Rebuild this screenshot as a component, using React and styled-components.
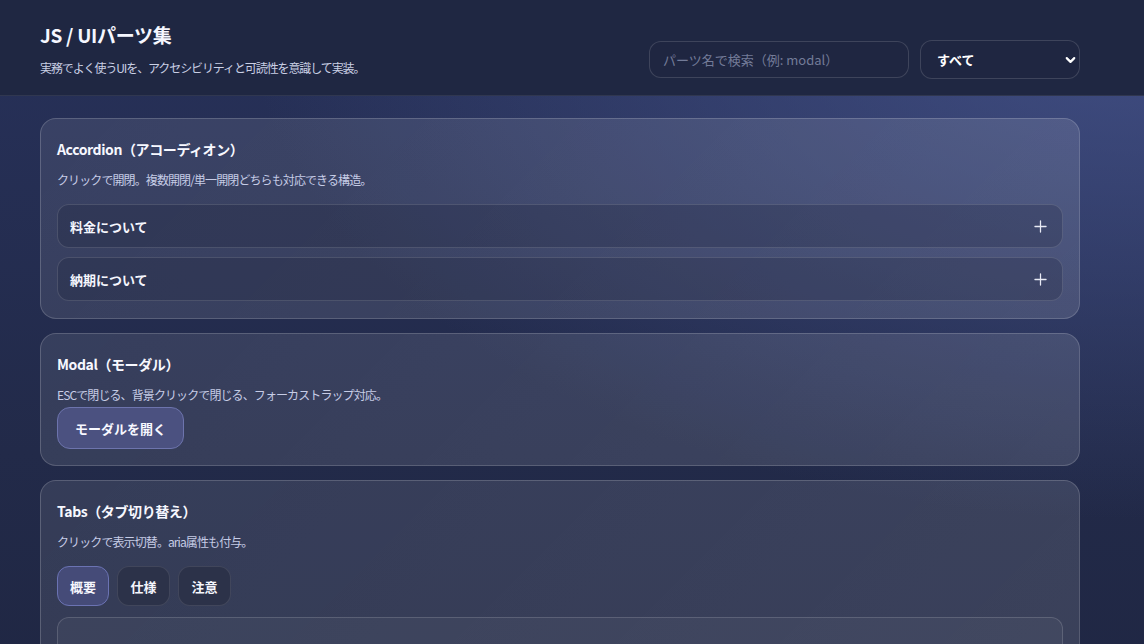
import React, { useState } from "react";
import styled, { createGlobalStyle } from "styled-components";
import { Plus, ChevronDown } from "lucide-react";

const GlobalStyle = createGlobalStyle`
  html, body {
    margin: 0;
    padding: 0;
    height: 100%;
  }
  body {
    font-family: "Noto Sans CJK JP", "Noto Sans", sans-serif;
    color: #f3f5fc;
    background: #222a48;
    overflow: hidden;
  }
  * { box-sizing: border-box; }
`;

const Page = styled.div`
  min-height: 100vh;
  background:
    radial-gradient(ellipse 900px 520px at 100% 0%, rgba(70, 84, 140, 0.85), rgba(70, 84, 140, 0) 100%),
    linear-gradient(180deg, #27315a 0%, #222a49 60%, #1f2642 100%);
`;

const Header = styled.header`
  background: #1f2742;
  border-bottom: 1px solid rgba(255, 255, 255, 0.08);
  padding: 21px 0 18px 40px;
`;

const HeaderInner = styled.div`
  width: 1040px;
  display: flex;
  justify-content: space-between;
  align-items: flex-end;
`;

const Brand = styled.div`
  display: flex;
  flex-direction: column;
`;

const SiteTitle = styled.h1`
  margin: 0;
  font-size: 19px;
  line-height: 28px;
  font-weight: 700;
  letter-spacing: -0.3px;
  color: #f5f7ff;
`;

const SiteLead = styled.p`
  margin: 10px 0 0;
  font-size: 12px;
  line-height: 18px;
  letter-spacing: -1.1px;
  color: #c9cfe4;
`;

const Controls = styled.div`
  display: flex;
  align-items: center;
  gap: 11px;
  margin-bottom: -2px;
`;

const Search = styled.input`
  width: 260px;
  height: 37px;
  border-radius: 12px;
  border: 1px solid rgba(255, 255, 255, 0.14);
  background: #1f2641;
  color: #f3f5fc;
  padding: 0 13px;
  font-family: inherit;
  font-size: 13px;
  outline: none;
  &::placeholder {
    color: #737b98;
  }
`;

const SelectWrap = styled.div`
  position: relative;
  width: 160px;
`;

const Select = styled.select`
  appearance: none;
  width: 100%;
  height: 39px;
  border-radius: 12px;
  border: 1px solid rgba(255, 255, 255, 0.14);
  background: #1f2641;
  color: #ffffff;
  padding: 0 16px;
  font-family: inherit;
  font-size: 13px;
  font-weight: 700;
  outline: none;
`;

const SelectIcon = styled.span`
  position: absolute;
  right: 2px;
  top: 50%;
  transform: translateY(-50%);
  display: flex;
  color: #ffffff;
  pointer-events: none;
`;

const Main = styled.main`
  padding: 22px 0 0 40px;
  display: flex;
  flex-direction: column;
  gap: 14px;
`;

const Card = styled.section`
  width: 1040px;
  border-radius: 16px;
  border: 1px solid rgba(255, 255, 255, 0.17);
  background: linear-gradient(135deg, rgba(255, 255, 255, 0.09), rgba(255, 255, 255, 0.12));
  padding: 16px;
`;

const CardTitle = styled.h2`
  margin: 0;
  font-size: 14px;
  line-height: 28px;
  font-weight: 700;
  letter-spacing: -0.4px;
  color: #f7f8ff;
`;

const CardLead = styled.p`
  margin: 8px 0 0;
  font-size: 12px;
  line-height: 18px;
  letter-spacing: -0.9px;
  color: #c6cce6;
`;

const AccordionList = styled.div`
  margin-top: 15px;
  padding-bottom: 1px;
  display: flex;
  flex-direction: column;
  gap: 9px;
`;

const AccordionButton = styled.button`
  width: 100%;
  height: 44px;
  display: flex;
  align-items: center;
  justify-content: space-between;
  padding: 0 12px 0 12px;
  border-radius: 12px;
  border: 1px solid rgba(255, 255, 255, 0.13);
  background: rgba(22, 27, 50, 0.22);
  color: #f5f6fd;
  font-family: inherit;
  font-size: 13px;
  font-weight: 700;
  cursor: pointer;
  text-align: left;
`;

const PrimaryButton = styled.button`
  margin-top: 3px;
  height: 42px;
  padding: 0 17px;
  border-radius: 13px;
  border: 1px solid #6d74ad;
  background: #4b5180;
  color: #f7f8ff;
  font-family: inherit;
  font-size: 13px;
  font-weight: 700;
  cursor: pointer;
`;

const TabList = styled.div`
  margin-top: 15px;
  display: flex;
  gap: 8px;
`;

const Tab = styled.button`
  width: ${(p) => (p.$active ? "52px" : "53px")};
  height: 40px;
  border-radius: 12px;
  border: 1px solid ${(p) => (p.$active ? "#6b73b3" : "rgba(255, 255, 255, 0.1)")};
  background: ${(p) => (p.$active ? "#454b78" : "#2c3249")};
  color: #f5f6fd;
  font-family: inherit;
  font-size: 13px;
  font-weight: 700;
  cursor: pointer;
`;

const TabPanel = styled.div`
  margin-top: 11px;
  height: 120px;
  border-radius: 12px;
  border: 1px solid rgba(255, 255, 255, 0.15);
  background: rgba(255, 255, 255, 0.04);
`;

const faqs = ["料金について", "納期について"];
const tabs = ["概要", "仕様", "注意"];

export default function App() {
  const [activeTab, setActiveTab] = useState(0);

  return (
    <>
      <GlobalStyle />
      <Page>
        <Header>
          <HeaderInner>
            <Brand>
              <SiteTitle>JS / UIパーツ集</SiteTitle>
              <SiteLead>実務でよく使うUIを、アクセシビリティと可読性を意識して実装。</SiteLead>
            </Brand>
            <Controls>
              <Search placeholder="パーツ名で検索（例: modal）" />
              <SelectWrap>
                <Select defaultValue="all">
                  <option value="all">すべて</option>
                </Select>
                <SelectIcon>
                  <ChevronDown size={15} strokeWidth={3.5} />
                </SelectIcon>
              </SelectWrap>
            </Controls>
          </HeaderInner>
        </Header>

        <Main>
          <Card>
            <CardTitle>Accordion（アコーディオン）</CardTitle>
            <CardLead>クリックで開閉。複数開閉/単一開閉どちらも対応できる構造。</CardLead>
            <AccordionList>
              {faqs.map((q) => (
                <AccordionButton key={q}>
                  <span>{q}</span>
                  <Plus size={19} strokeWidth={1.6} color="#e8eaf4" />
                </AccordionButton>
              ))}
            </AccordionList>
          </Card>

          <Card>
            <CardTitle>Modal（モーダル）</CardTitle>
            <CardLead>ESCで閉じる、背景クリックで閉じる、フォーカストラップ対応。</CardLead>
            <PrimaryButton>モーダルを開く</PrimaryButton>
          </Card>

          <Card>
            <CardTitle>Tabs（タブ切り替え）</CardTitle>
            <CardLead>クリックで表示切替。aria属性も付与。</CardLead>
            <TabList>
              {tabs.map((t, i) => (
                <Tab key={t} $active={i === activeTab} onClick={() => setActiveTab(i)}>
                  {t}
                </Tab>
              ))}
            </TabList>
            <TabPanel />
          </Card>
        </Main>
      </Page>
    </>
  );
}
